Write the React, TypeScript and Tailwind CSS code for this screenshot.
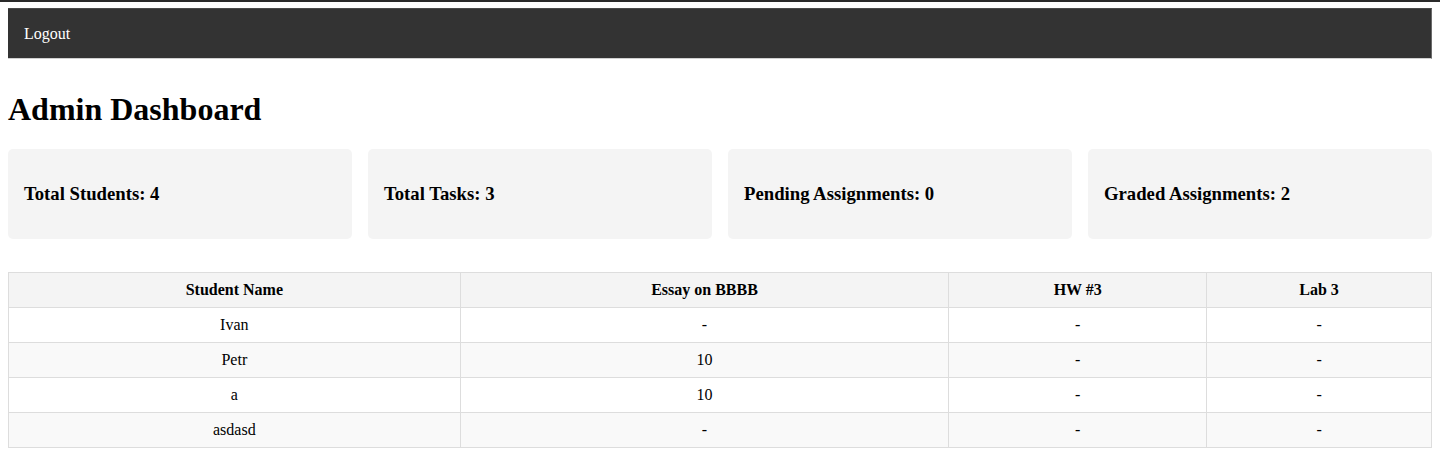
import React from "react";

interface Row {
  name: string;
  grades: string[];
}

const stats = [
  "Total Students: 4",
  "Total Tasks: 3",
  "Pending Assignments: 0",
  "Graded Assignments: 2",
];

const tasks = ["Essay on BBBB", "HW #3", "Lab 3"];

const rows: Row[] = [
  { name: "Ivan", grades: ["-", "-", "-"] },
  { name: "Petr", grades: ["10", "-", "-"] },
  { name: "a", grades: ["10", "-", "-"] },
  { name: "asdasd", grades: ["-", "-", "-"] },
];

export default function App() {
  return (
    <div className="min-h-[473px] bg-white text-black font-['Liberation_Serif','Times_New_Roman',serif]">
      {/* top strip */}
      <div className="h-[2px] w-full bg-[#2a2a2a]"></div>

      <div className="px-2 pt-[6px]">
        {/* Nav */}
        <nav className="h-[51px] bg-[#333333] border-t border-r border-t-[#4a4a4a] border-r-[#6a6a6a] border-b border-b-[#d0d0d0] px-4 flex items-center">
          <a className="text-white text-base leading-[18px] cursor-pointer">Logout</a>
        </nav>

        <h1 className="mt-[32px] mb-[21px] text-[32px] leading-[37px] font-bold">Admin Dashboard</h1>

        {/* Stat cards */}
        <div className="grid grid-cols-4 gap-4">
          {stats.map((s) => (
            <div key={s} className="h-[90px] bg-[#f4f4f4] rounded-[5px] px-4 flex items-center">
              <h3 className="text-[18.72px] font-bold leading-[22px]">{s}</h3>
            </div>
          ))}
        </div>

        {/* Grades table */}
        <table className="mt-[33px] w-full border-collapse border border-[#dddddd] text-base">
          <thead>
            <tr className="bg-[#f4f4f4]">
              <th className="w-[452px] h-[35px] border border-[#dddddd] px-2 font-bold text-center">Student Name</th>
              {tasks.map((t, i) => (
                <th
                  key={t}
                  className={`h-[35px] border border-[#dddddd] px-2 font-bold text-center ${
                    i === 0 ? "w-[489px]" : i === 1 ? "w-[258px]" : "w-[225px]"
                  }`}
                >
                  {t}
                </th>
              ))}
            </tr>
          </thead>
          <tbody>
            {rows.map((r, idx) => (
              <tr key={r.name} className={idx % 2 === 1 ? "bg-[#f9f9f9]" : "bg-white"}>
                <td className="h-[35px] border border-[#dddddd] px-2 text-center">{r.name}</td>
                {r.grades.map((g, i) => (
                  <td key={i} className="h-[35px] border border-[#dddddd] px-2 text-center">
                    {g}
                  </td>
                ))}
              </tr>
            ))}
          </tbody>
        </table>
      </div>
    </div>
  );
}
